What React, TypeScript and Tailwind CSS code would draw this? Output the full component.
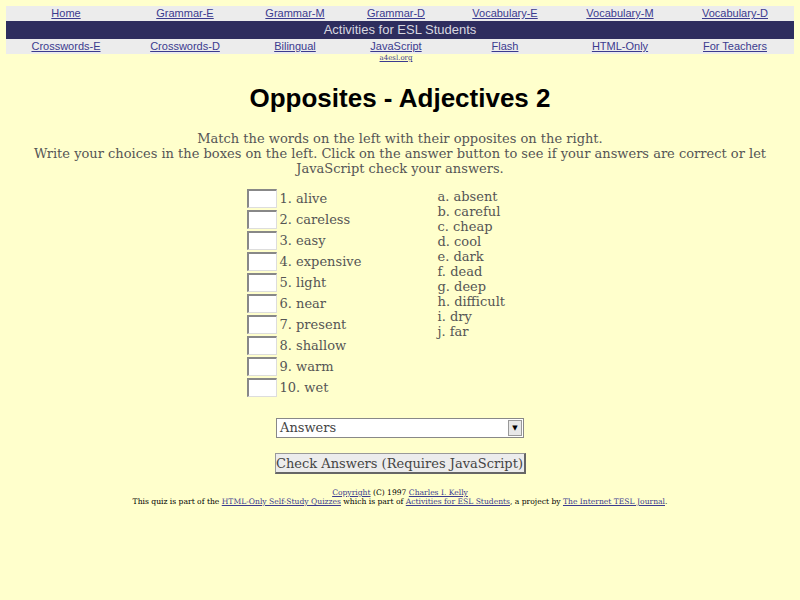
const topLinks = ["Home", "Grammar-E", "Grammar-M", "Grammar-D", "Vocabulary-E", "Vocabulary-M", "Vocabulary-D"];
const bottomLinks = ["Crosswords-E", "Crosswords-D", "Bilingual", "JavaScript", "Flash", "HTML-Only", "For Teachers"];

const words = ["alive", "careless", "easy", "expensive", "light", "near", "present", "shallow", "warm", "wet"];
const opposites = ["absent", "careful", "cheap", "cool", "dark", "dead", "deep", "difficult", "dry", "far"];
const letters = "abcdefghij";

function NavRow({ links }: { links: string[] }) {
  return (
    <div className="grid grid-cols-[120px_118px_102px_100px_118px_112px_118px] bg-[#ececec] h-[15px] items-center">
      {links.map((l) => (
        <a key={l} href="#" className="text-center text-[11px] leading-[15px] text-[#3b3b8f] underline">
          {l}
        </a>
      ))}
    </div>
  );
}

export default function App() {
  return (
    <div className="min-h-screen bg-[#ffffcc] pt-[6px] text-[#555]">
      {/* site navigation */}
      <div className="mx-[6px] font-['Liberation_Sans',Arial,sans-serif]">
        <NavRow links={topLinks} />
        <div className="bg-[#2e2d5e] h-[18px] flex items-center justify-center text-[13px] text-[#d8d8e0]">
          Activities for ESL Students
        </div>
        <NavRow links={bottomLinks} />
        <div className="grid grid-cols-[120px_118px_102px_100px_118px_112px_118px]">
          <div className="col-start-4 text-center text-[7px] leading-[9px] text-[#3b3b8f] underline font-['DejaVu_Serif',serif]">
            a4esl.org
          </div>
        </div>
      </div>

      <h1 className="mt-[17px] text-center text-[26px] font-bold text-black leading-[36px] font-['Comic_Sans_MS','Liberation_Sans',sans-serif]">
        Opposites - Adjectives 2
      </h1>

      <div className="mt-[15px] text-center text-[13px] leading-[15px] font-['DejaVu_Serif',serif]">
        <p>Match the words on the left with their opposites on the right.</p>
        <p>
          Write your choices in the boxes on the left. Click on the answer button to see if your answers are correct or let
          <br />
          JavaScript check your answers.
        </p>
      </div>

      {/* quiz */}
      <div className="mt-[12px] flex justify-center font-['DejaVu_Serif',serif] text-[13px]">
        <div className="w-[191px] flex flex-col">
          {words.map((w, i) => (
            <div key={w} className="h-[21px] flex items-center">
              <input className="w-[30px] h-[19px] bg-white border-t-2 border-l-2 border-[#888] border-b border-r border-b-[#ddd] border-r-[#ddd] mr-[3px]" />
              <span>
                {i + 1}. {w}
              </span>
            </div>
          ))}
        </div>
        <div className="w-[116px] pt-[1px] flex flex-col leading-[15px]">
          {opposites.map((o, i) => (
            <span key={o}>
              {letters[i]}. {o}
            </span>
          ))}
        </div>
      </div>

      <div className="mt-[20px] flex flex-col items-center gap-[15px] font-['DejaVu_Serif',serif] text-[13px]">
        <div className="w-[248px] h-[20px] bg-white border border-[#888] flex items-center justify-between pl-[3px] pr-[1px]">
          <span className="text-[#444]">Answers</span>
          <span className="w-[14px] h-[16px] bg-[#e8e8e8] border border-[#999] flex items-center justify-center text-[7px] text-black">
            ▼
          </span>
        </div>
        <button className="w-[251px] h-[21px] bg-[#ececec] border border-[#999] border-r-2 border-b-2 border-r-[#666] border-b-[#666] text-[#444] text-[13px] leading-[17px]">
          Check Answers (Requires JavaScript)
        </button>
      </div>

      {/* credits */}
      <div className="mt-[14px] text-center text-[7.6px] leading-[9px] text-black font-['DejaVu_Serif',serif]">
        <p>
          <a href="#" className="underline text-[#3b3b8f]">Copyright</a> (C) 1997{" "}
          <a href="#" className="underline text-[#3b3b8f]">Charles I. Kelly</a>
        </p>
        <p>
          This quiz is part of the <a href="#" className="underline text-[#3b3b8f]">HTML-Only Self-Study Quizzes</a> which is part of{" "}
          <a href="#" className="underline text-[#3b3b8f]">Activities for ESL Students</a>, a project by{" "}
          <a href="#" className="underline text-[#3b3b8f]">The Internet TESL Journal</a>.
        </p>
      </div>
    </div>
  );
}
